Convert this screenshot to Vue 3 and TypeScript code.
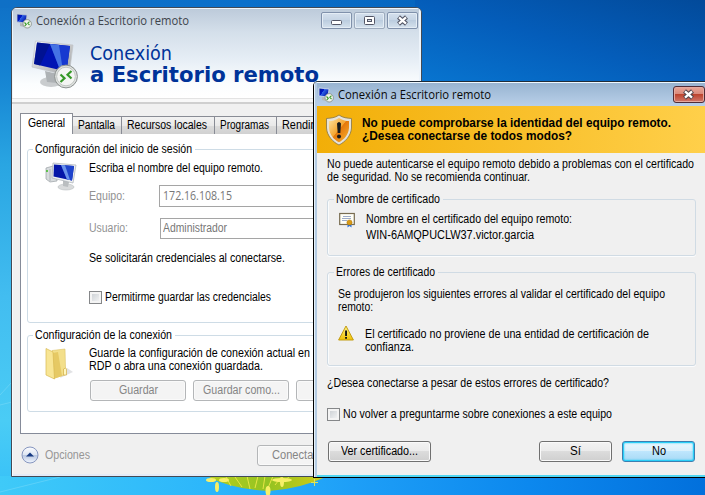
<script setup lang="ts">
import type { Directive } from 'vue'

interface Tab {
  name: string
  width: number
  text: number
}

const tabs: Tab[] = [
  { name: 'Pantalla', width: 49, text: 37 },
  { name: 'Recursos locales', width: 93, text: 80 },
  { name: 'Programas', width: 62, text: 49 },
  { name: 'Rendimiento', width: 74, text: 61 },
]

// Narrows or widens the letters of a line so that it takes the given width in pixels.
const vFit: Directive<HTMLElement, number> = {
  mounted(el, binding) {
    el.style.display = 'inline-block'
    const natural = el.getBoundingClientRect().width
    el.style.width = `${binding.value}px`
    el.style.transformOrigin = '0 0'
    el.style.transform = `scaleX(${binding.value / natural})`
  },
}
</script>

<template>
  <div class="desktop">
    <svg class="wallpaper" viewBox="0 0 705 495">
      <defs>
        <linearGradient id="sky" x1="0" y1="0" x2="0" y2="1">
          <stop offset="0" stop-color="#0f70c6" />
          <stop offset=".15" stop-color="#1583d2" />
          <stop offset=".33" stop-color="#29a5e2" />
          <stop offset=".6" stop-color="#42bdf0" />
          <stop offset=".85" stop-color="#4accf5" />
          <stop offset="1" stop-color="#36c0f8" />
        </linearGradient>
        <linearGradient id="topsky" x1="0" y1="0" x2="1" y2="0">
          <stop offset="0" stop-color="#0f70c6" />
          <stop offset=".35" stop-color="#0a70cb" />
          <stop offset=".65" stop-color="#0463bd" />
          <stop offset="1" stop-color="#024a9a" />
        </linearGradient>
        <linearGradient id="corner" x1="0" y1="1" x2="1" y2="0">
          <stop offset="0" stop-color="#0876d1" />
          <stop offset=".5" stop-color="#045dba" />
          <stop offset="1" stop-color="#024a9a" />
        </linearGradient>
        <linearGradient id="floor" x1="0" y1="0" x2="1" y2="0">
          <stop offset="0" stop-color="#3fcaf8" />
          <stop offset=".3" stop-color="#2cb6fb" />
          <stop offset=".5" stop-color="#1e9ff7" />
          <stop offset=".75" stop-color="#0c88ee" />
          <stop offset="1" stop-color="#0270dc" />
        </linearGradient>
        <linearGradient id="leaf" x1="0" y1="0" x2="1" y2="0">
          <stop offset="0" stop-color="#b9cf20" />
          <stop offset=".5" stop-color="#93c322" />
          <stop offset="1" stop-color="#d5cc18" />
        </linearGradient>
        <linearGradient id="screen" x1="0" y1="0" x2="1" y2=".6">
          <stop offset="0" stop-color="#001a8c" />
          <stop offset=".45" stop-color="#0018c8" />
          <stop offset=".47" stop-color="#2f62e6" />
          <stop offset="1" stop-color="#0012a8" />
        </linearGradient>
        <linearGradient id="bezel" x1="0" y1="0" x2="1" y2="1">
          <stop offset="0" stop-color="#fafafa" />
          <stop offset="1" stop-color="#9a9c9e" />
        </linearGradient>
      </defs>
      <rect width="705" height="495" fill="url(#sky)" />
      <rect width="705" height="8" fill="url(#topsky)" />
      <rect x="415" width="290" height="84" fill="url(#corner)" />
      <rect y="476" width="705" height="19" fill="url(#floor)" />
      <path d="M0 395 12 382M0 405l12-3M0 492l60-15" stroke="#8be0fa" opacity=".4" />
      <path d="M207 476H328Q300 489 269 491Q230 489 207 476Z" fill="url(#leaf)" />
      <path d="M226 477l5 9m4-9 7 10m5-11 3 13m8-13-3 12m10-12-2 13m10-13-5 12m14-12-7 9m15-9-9 8" stroke="#e8e545" fill="none" />
      <g fill="#f7ef68">
        <ellipse cx="211" cy="480" rx="5" ry="2" /><ellipse cx="224" cy="480" rx="5" ry="2" />
        <ellipse cx="217" cy="487" rx="2" ry="5" /><ellipse cx="282" cy="480" rx="10" ry="2" />
        <ellipse cx="282" cy="482" rx="2" ry="5" /><ellipse cx="268" cy="491" rx="2.500" ry="5" />
      </g>
      <path d="M311 482.500h7M314.500 479v7" stroke="#dce45a" />
    </svg>

    <section class="window main">
      <header class="aero">
        <div class="titlebar">
          <svg class="appicon" viewBox="0 0 16 16">
            <path d="M1 1 11 2 10 10 1 9Z" fill="url(#screen)" stroke="#c3cad2" stroke-width=".8" />
            <path d="M4 10 9 11 8 14 4 13Z" fill="#b3b8bb" />
            <circle cx="11.200" cy="10.800" r="4.200" fill="#f1f3ee" stroke="#828b82" stroke-width=".8" />
            <path d="M8.500 9.500 10.300 11.300 8.700 13M13.500 8.600 11.800 10.300 13.500 12" fill="none" stroke="#3c9d2c" stroke-width="1.100" />
          </svg>
          <span v-fit="153" class="caption">Conexión a Escritorio remoto</span>
          <div class="controls">
            <span class="ctl"><svg viewBox="0 0 31 17"><rect x="10.500" y="8.500" width="10" height="4" rx="1" fill="#fff" stroke="#535666" /></svg></span>
            <span class="ctl dim"><svg viewBox="0 0 31 17"><rect x="10.500" y="4.500" width="10" height="8" rx="1" fill="#fff" stroke="#535666" /><rect x="13.500" y="7.500" width="4" height="2" fill="#d3dce8" stroke="#535666" /></svg></span>
            <span class="ctl"><svg viewBox="0 0 31 17"><path d="M11.500 5 19.500 12M19.500 5 11.500 12" stroke="#535666" stroke-width="4.400" /><path d="M12 5.400 19 11.600M19 5.400 12 11.600" stroke="#fff" stroke-width="2.200" /></svg></span>
          </div>
        </div>
        <div class="brand">
          <svg class="logo" viewBox="0 0 48 50">
            <ellipse cx="20" cy="42" rx="11" ry="5" fill="#c9ccce" />
            <path d="M14 31 27 34 26 43 16 42Z" fill="#aeb2b5" />
            <path d="M4.500 1 42 5 38 36 1 27Z" fill="url(#bezel)" stroke="#c0c4c8" stroke-width=".7" />
            <path d="M6 2.500 39 6 35.500 31.500 3 24Z" fill="#0014b4" />
            <path d="M19 4 39 6 35.500 31.500 29 30Z" fill="#1739d0" />
            <path d="M19 4 28 5 32 31 29 30Z" fill="#5a8bec" opacity=".7" />
            <path d="M6 2.500 19 4 9 25.500 3 24Z" fill="#00107c" opacity=".6" />
            <circle cx="35" cy="36.500" r="11.400" fill="#dfe2e0" stroke="#8b908e" stroke-width="1" />
            <circle cx="35" cy="36.500" r="9.300" fill="#f4f5f3" stroke="#b8bcb9" stroke-width=".8" />
            <path d="M29.500 34.500 33.500 38.200 29.500 42M40.500 31 36.500 34.800 40.500 38.500" fill="none" stroke="#369928" stroke-width="2.200" />
          </svg>
          <div class="brandtext">
            <div><span v-fit="82">Conexión</span></div>
            <div class="strong"><span v-fit="229">a Escritorio remoto</span></div>
          </div>
        </div>
      </header>
      <div class="rule"></div>
      <div class="client">
        <nav class="tabs">
          <span class="tab active"><span v-fit="37">General</span></span>
          <span v-for="t in tabs" :key="t.name" class="tab" :style="{ width: t.width + 'px' }"><span v-fit="t.text">{{ t.name }}</span></span>
        </nav>
        <div class="panel">
          <fieldset class="group session">
            <legend><span v-fit="157">Configuración del inicio de sesión</span></legend>
            <svg class="pc" viewBox="0 0 32 30">
              <path d="M1 6 8 4 12 6V19L5 20 1 17Z" fill="#d8dcde" stroke="#999fa3" stroke-width=".7" />
              <path d="M5 7V19" stroke="#b0b4b8" /><path d="M2 8v2" stroke="#3dbb22" stroke-width="1.500" />
              <ellipse cx="21" cy="25" rx="8" ry="3" fill="#d9dbdc" stroke="#b9bdc0" stroke-width=".6" />
              <path d="M18 18 24 20 23 25 18 24Z" fill="#babec0" />
              <path d="M8 1 31 3 28 21 7 16Z" fill="#edf0f2" stroke="#a9afb5" stroke-width=".7" />
              <path d="M9 2.500 29 4 27 18.500 8.500 14.500Z" fill="#0516a8" />
              <path d="M16 3 29 4 27 18.500 22 17.500Z" fill="#1e44cc" />
              <path d="M16 3 20 3.300 25 18 22 17.500Z" fill="#6b93ea" />
            </svg>
            <div class="fields">
              <div class="line"><span v-fit="174">Escriba el nombre del equipo remoto.</span></div>
              <div class="field"><label><span v-fit="36">Equipo:</span></label><div class="input ip"><span v-fit="69">172.16.108.15</span></div></div>
              <div class="field second"><label><span v-fit="39">Usuario:</span></label><div class="input"><span v-fit="64">Administrador</span></div></div>
              <div class="line prompt"><span v-fit="196">Se solicitarán credenciales al conectarse.</span></div>
              <div class="line check"><i class="box"></i><span v-fit="166">Permitirme guardar las credenciales</span></div>
            </div>
          </fieldset>
          <fieldset class="group connection">
            <legend><span v-fit="137">Configuración de la conexión</span></legend>
            <svg class="folder" viewBox="0 0 30 33">
              <path d="M15 31 28 25 22 21Z" fill="#c9cacd" opacity=".55" />
              <path d="M7 3.500 20 2 20.500 21 20 28 9 31Z" fill="#f3df8b" stroke="#dcc368" stroke-width=".6" />
              <path d="M8 6 13 5 17 29 8.500 32Z" fill="#e6c964" />
              <path d="M1 1.500 8 5 9.500 32 1 28Z" fill="#f8e594" stroke="#d8b950" stroke-width=".7" />
              <path d="M18.500 22q2.500-2 3 0v6h-3z" fill="#fff6bd" stroke="#d2ae45" stroke-width=".7" />
            </svg>
            <div class="fields">
              <div class="line"><span v-fit="221">Guarde la configuración de conexión actual en</span></div>
              <div class="line"><span v-fit="174">RDP o abra una conexión guardada.</span></div>
              <div class="buttons">
                <span class="btn off"><span v-fit="39">Guardar</span></span>
                <span class="btn off"><span v-fit="77">Guardar como...</span></span>
                <span class="btn off"></span>
              </div>
            </div>
          </fieldset>
        </div>
        <footer class="foot">
          <svg class="round" viewBox="0 0 18 18">
            <defs><linearGradient id="ball" x1="0" y1="0" x2="0" y2="1"><stop offset="0" stop-color="#fdfdff" /><stop offset=".5" stop-color="#dde5f2" /><stop offset=".52" stop-color="#bac8e1" /><stop offset="1" stop-color="#f2f7ff" /></linearGradient></defs>
            <circle cx="9" cy="9" r="8" fill="url(#ball)" stroke="#8696bf" /><path d="M5 10.500 9 6.500 13 10.500Z" fill="#163a82" />
          </svg>
          <span v-fit="45" class="muted">Opciones</span>
          <span class="btn off connect"><span v-fit="45">Conectar</span></span>
        </footer>
      </div>
    </section>

    <section class="window dialog">
      <div class="titlebar">
        <svg class="appicon" viewBox="0 0 16 16">
          <path d="M1 1 11 2 10 10 1 9Z" fill="url(#screen)" stroke="#d9e3ed" stroke-width=".8" />
          <path d="M4 10 9 11 8 14 4 13Z" fill="#b3b8bb" />
          <circle cx="11.200" cy="10.800" r="4.200" fill="#f1f3ee" stroke="#828b82" stroke-width=".8" />
          <path d="M8.500 9.500 10.300 11.300 8.700 13M13.500 8.600 11.800 10.300 13.500 12" fill="none" stroke="#3c9d2c" stroke-width="1.100" />
        </svg>
        <span v-fit="153" class="caption">Conexión a Escritorio remoto</span>
        <span class="close"><svg viewBox="0 0 31 17"><path d="M11.500 5 19.500 12M19.500 5 11.500 12" stroke="#54464c" stroke-width="4.400" /><path d="M12 5.400 19 11.600M19 5.400 12 11.600" stroke="#fff" stroke-width="2.300" /></svg></span>
      </div>
      <div class="banner">
        <svg class="shield" viewBox="0 0 28 32">
          <defs>
            <linearGradient id="gold" x1="0" y1="0" x2="1" y2="1"><stop offset="0" stop-color="#ffe3a0" /><stop offset=".48" stop-color="#f5a530" /><stop offset=".5" stop-color="#e5780c" /><stop offset="1" stop-color="#f8b531" /></linearGradient>
          </defs>
          <path d="M14 1C10 4 6 4 1.500 4.500V14C2 22 8 28 14 31C20 28 26 22 26.500 14V4.500C22 4 18 4 14 1Z" fill="#e6e2d8" stroke="#857346" stroke-width=".8" />
          <path d="M14 4C10 6.500 7 7 4 7V14C4.500 21 9 25.500 14 28.300C19 25.500 23.500 21 24 14V7C21 7 18 6.500 14 4Z" fill="url(#gold)" />
          <path d="M12 9.500Q14 6.500 16 9.500L15.300 19H12.700Z" fill="#18191b" /><circle cx="14" cy="22.500" r="2" fill="#18191b" />
        </svg>
        <div class="warning">
          <div><span v-fit="309">No puede comprobarse la identidad del equipo remoto.</span></div>
          <div><span v-fit="210">¿Desea conectarse de todos modos?</span></div>
        </div>
      </div>
      <div class="content">
        <div class="line"><span v-fit="367">No puede autenticarse el equipo remoto debido a problemas con el certificado</span></div>
        <div class="line"><span v-fit="203">de seguridad. No se recomienda continuar.</span></div>
        <fieldset class="group cert">
          <legend><span v-fit="104">Nombre de certificado</span></legend>
          <svg class="small" viewBox="0 0 16 16">
            <rect x=".7" y="1.500" width="14.600" height="11" fill="#fffff7" stroke="#786c50" stroke-width="1.200" />
            <path d="M4 4.500h8M3 6.500h9M3 8.500h5" stroke="#8495bb" stroke-width=".8" />
            <path d="M8.500 11v4.500l2-1.500 2 1.500V11Z" fill="#2d74dc" /><circle cx="10.500" cy="10.500" r="2.600" fill="#d99b15" stroke="#ad7109" stroke-width=".5" />
          </svg>
          <div class="details">
            <div><span v-fit="206">Nombre en el certificado del equipo remoto:</span></div>
            <div><span v-fit="168">WIN-6AMQPUCLW37.victor.garcia</span></div>
          </div>
        </fieldset>
        <fieldset class="group errors">
          <legend><span v-fit="99">Errores de certificado</span></legend>
          <div class="errorbody">
            <div class="line"><span v-fit="327">Se produjeron los siguientes errores al validar el certificado del equipo</span></div>
            <div class="line"><span v-fit="35">remoto:</span></div>
            <div class="issue">
              <svg class="small" viewBox="0 0 16 16">
                <defs><linearGradient id="amber" x1="0" y1="0" x2="0" y2="1"><stop offset="0" stop-color="#fff48a" /><stop offset="1" stop-color="#f1c100" /></linearGradient></defs>
                <path d="M8 1 15.400 15H.6Z" fill="url(#amber)" stroke="#c29b11" stroke-linejoin="round" /><path d="M7.100 5.500h1.900V11H7.100zM7.100 12h1.900v1.800H7.100z" fill="#161616" />
              </svg>
              <div>
                <div class="line"><span v-fit="284">El certificado no proviene de una entidad de certificación de</span></div>
                <div class="line"><span v-fit="49">confianza.</span></div>
              </div>
            </div>
          </div>
        </fieldset>
        <div class="line question"><span v-fit="282">¿Desea conectarse a pesar de estos errores de certificado?</span></div>
        <div class="line check"><i class="box"></i><span v-fit="269">No volver a preguntarme sobre conexiones a este equipo</span></div>
        <div class="actions">
          <span class="btn view"><span v-fit="77">Ver certificado...</span></span>
          <span class="btn yes"><span v-fit="11">Sí</span></span>
          <span class="btn primary"><span v-fit="14">No</span></span>
        </div>
      </div>
    </section>
  </div>
</template>

<style>
body { margin: 0; overflow: hidden; }
</style>

<style scoped>
* { box-sizing: border-box; }
.desktop { position: relative; width: 705px; height: 495px; overflow: hidden; background: #0a70cb; color: #000; font: 12px/13px "Liberation Sans", Arial, sans-serif; white-space: nowrap; }
svg { display: block; flex: none; }
.wallpaper { width: 705px; height: 495px; }
.window { position: absolute; overflow: hidden; }
.titlebar { display: flex; align-items: center; }
.appicon { width: 16px; height: 16px; margin-right: 4px; }
.caption { flex: none; font: 12px/16px "Open Sans", "Noto Sans", sans-serif; }
.main { left: 11px; top: 7px; width: 411px; height: 470px; border: 1px solid #434a55; border-radius: 6px 6px 0 0; background: #f0f0f0; box-shadow: inset 1px 1px #f6fbff, inset -2px -2px #e4ebf7; }
.aero { height: 90px; background: linear-gradient(#bccada 0, #d4dfea 24px, #e5edf5 50px, #fbfdfe 76px, #fff); box-shadow: inset 1px 1px #eef6fc, inset -2px 0 #edf4fb; }
.main .titlebar { height: 25px; padding-left: 4px; color: #3e444c; }
.controls { display: flex; gap: 2px; margin: 0 3px 0 auto; }
.ctl { width: 31px; height: 17px; border: 1px solid #8091ab; border-radius: 2px; background: linear-gradient(#d5e0ed, #c5d4e4 49%, #bccddf 50%, #d5e2ed); box-shadow: inset 0 0 0 1px #e4edf5; }
.ctl.dim { border-color: #9caabd; }
.ctl svg { width: 31px; height: 17px; margin: -1px; }
.brand { display: flex; padding: 7px 0 0 19px; }
.logo { width: 48px; height: 50px; }
.brandtext { padding: 2px 0 0 11px; color: #003399; font: 20px/22px "DejaVu Sans", sans-serif; }
.brandtext .strong { font-weight: bold; font-size: 21px; }
.rule { height: 6px; border-top: 1px solid #e3e3e3; border-bottom: 2px solid #cfcfcf; background: #f8f8f8; }
.client { padding: 9px 0 0 8px; }
.tabs { display: flex; align-items: flex-end; height: 21px; position: relative; }
.tab { height: 18px; padding-left: 5px; line-height: 17px; border: 1px solid #898c95; border-left-width: 0; border-bottom: 0; background: linear-gradient(#f2f2f2, #e9e9e9 50%, #dcdcdc 51%, #d1d1d1); }
.tab.active { position: relative; z-index: 1; width: 53px; height: 21px; padding: 0 0 0 7px; line-height: 18px; background: #fff; border-left-width: 1px; }
.panel { height: 301px; margin-top: -1px; padding: 8px 0 0 6px; background: #fff; border: 1px solid #858b99; border-right: 0; }
.group { min-width: 0; margin: 0; padding: 0; border: 1px solid #cedce6; border-radius: 3px; }
.group legend { height: 14px; margin-left: 5px; padding: 0 3px 0 2px; line-height: 14px; }
.main .group { width: 380px; }
.session { height: 181px; }
.pc { width: 32px; height: 30px; margin: 6px 0 0 17px; float: left; }
.session .fields { margin-left: 61px; padding-top: 6px; }
.field { display: flex; align-items: center; height: 22px; margin-top: 10px; color: #929292; }
.field label { width: 70px; }
.input { width: 220px; height: 22px; padding-left: 3px; line-height: 21px; color: #777; border: 1px solid #a5a5a5; background: #fff; }
.input.ip { font: 12px/20px "Open Sans", "Noto Sans", sans-serif; }
.field.second .input { margin-left: 1px; height: 21px; padding-left: 2px; line-height: 19px; }
.prompt { margin-top: 13px; }
.check { display: flex; align-items: center; }
.box { flex: none; width: 13px; height: 13px; margin-right: 3px; border: 1px solid #858789; background: linear-gradient(135deg, #c6cbd0, #f9f9f9); box-shadow: inset 0 0 0 2px #f4f4f4; }
.session .check { margin-top: 26px; }
.main .connection { height: 84px; margin-top: 5px; }
.folder { width: 30px; height: 33px; float: left; margin: 5px 0 0 17px; }
.connection .fields { margin-left: 61px; padding-top: 5px; }
.buttons { display: flex; gap: 7px; margin: 7px 0 0 1px; }
.btn { display: flex; justify-content: center; align-items: center; flex: none; width: 96px; height: 21px; border: 1px solid #707070; border-radius: 3px; background: linear-gradient(#f3f3f3, #ebebeb 49%, #dcdcdc 50%, #cfcfcf); box-shadow: inset 0 0 0 1px #fafafa; }
.btn.off { color: #858585; border-color: #b4b6b8; background: #f4f4f4; }
.foot { display: flex; align-items: center; height: 42px; padding-left: 1px; }
.round { width: 18px; height: 18px; margin-right: 6px; }
.muted { flex: none; color: #969696; }
.connect { width: 75px; margin-left: 167px; }
.dialog { left: 313px; top: 81px; width: 398px; height: 397px; border: 1px solid #000; border-radius: 5px 5px 0 0; border-top-color: #202c38; background: #f0f0f0; box-shadow: inset 0 -2px #52d7f2; padding-left: 2px; }
.dialog::before { content: ""; position: absolute; left: 0; top: 0; bottom: 0; width: 2px; border-left: 1px solid #e7f2fa; background: #b4cbe2; }
.dialog .titlebar { height: 24px; margin-left: -2px; padding-left: 4px; background: linear-gradient(#98b4d1, #b9d0e9); border-top: 1px solid #eef8ff; color: #090909; }
.close { width: 32px; height: 17px; margin: -1px 0 0 182px; border: 1px solid #502c37; border-radius: 3px; background: linear-gradient(#e9a798, #d88779 49%, #bd442e 50%, #d2786c); box-shadow: inset 0 0 0 1px #e5aaa0; }
.close svg { width: 31px; height: 17px; margin: -1px; }
.banner { display: flex; align-items: center; height: 47px; padding-left: 9px; background: linear-gradient(90deg, #f2ae07, #ffd04b); }
.shield { width: 28px; height: 32px; }
.warning { padding-left: 9px; font-weight: bold; }
.content { padding: 5px 0 0 11px; }
.line { height: 13px; }
.content .group { width: 369px; border-color: #d0dbe4; box-shadow: inset 1px 0 #fafcfd, 0 1px #fbfcfd; }
.content legend { margin-left: 6px; }
.content .cert { height: 64px; margin-top: 8px; }
.small { width: 16px; height: 16px; }
.cert .small { float: left; margin: 6px 0 0 11px; }
.details { margin-left: 38px; padding-top: 5px; line-height: 16px; }
.content .errors { height: 101px; margin-top: 9px; }
.errorbody { padding: 9px 0 0 10px; }
.issue { display: flex; gap: 11px; margin-top: 14px; }
.issue .small { margin-top: -3px; }
.question { margin-top: 11px; }
.content .check { margin-top: 18px; }
.actions { display: flex; margin: 20px 0 0 1px; }
.view { width: 103px; }
.yes { width: 73px; margin-left: 108px; }
.primary { width: 73px; margin-left: 10px; border-color: #3c7fb1; background: linear-gradient(#eaf6fd, #d9f0fc 49%, #bee6fd 50%, #a7d9f5); box-shadow: inset 0 0 0 1px #29cff8, inset 0 0 2px 1px #29cff8; }
</style>
